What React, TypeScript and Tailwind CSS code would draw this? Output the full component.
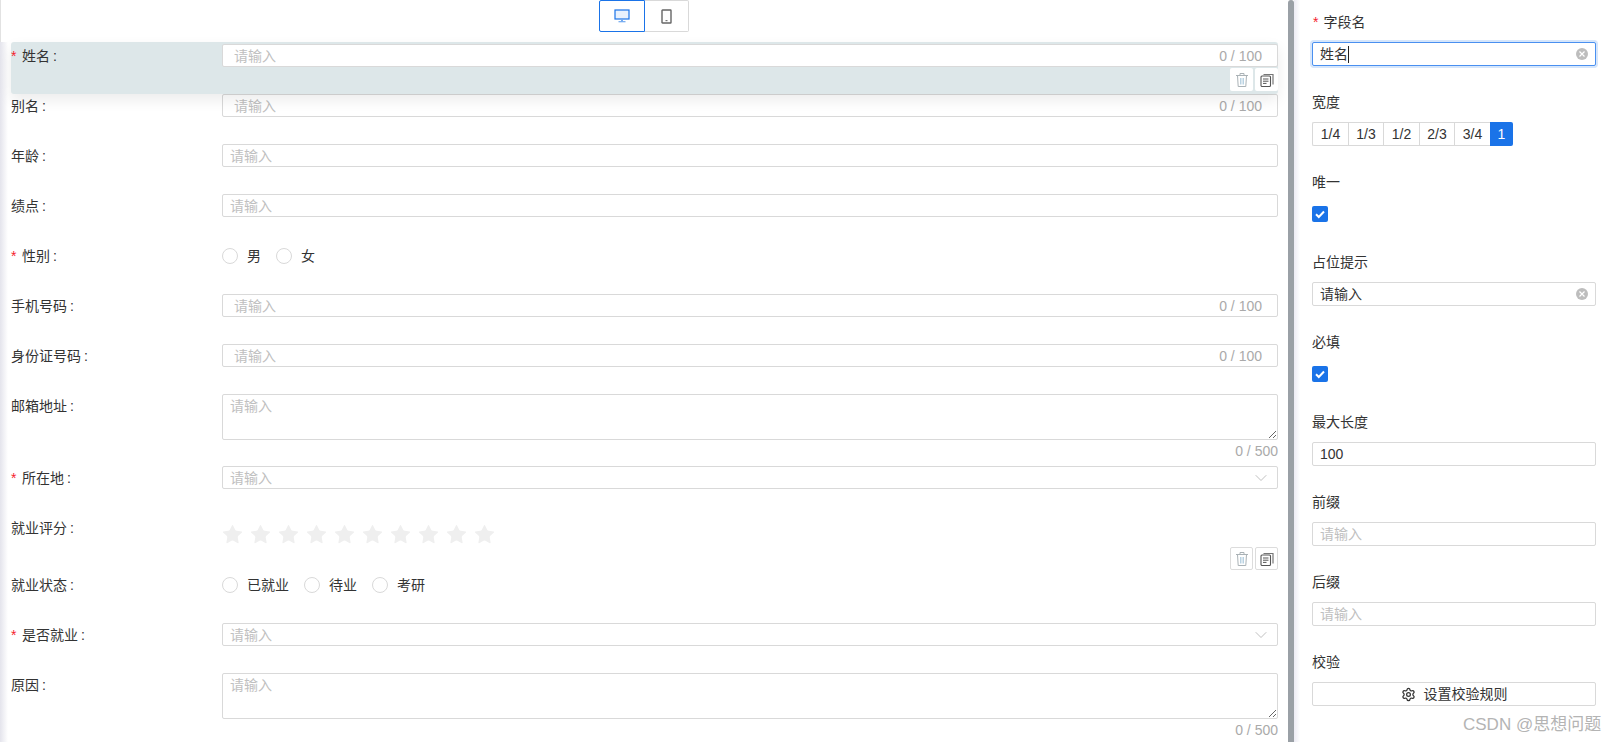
import { ChevronDown, Settings, Star } from 'lucide-react';

const fontStack = { fontFamily: '"Liberation Sans", "Noto Sans CJK SC", sans-serif' };

const MonitorIcon = () => (
  <svg width="16" height="14" viewBox="0 0 16 14" fill="none">
    <rect x="1" y="1" width="14" height="9" fill="#e8f1fd" stroke="#1a73e8" strokeWidth="1.2" />
    <path d="M8 10v2.5" stroke="#6fa8f0" strokeWidth="2" />
    <path d="M4.5 12.7h7" stroke="#6fa8f0" strokeWidth="1.2" />
  </svg>
);

const PhoneIcon = () => (
  <svg width="11" height="15" viewBox="0 0 11 15" fill="none">
    <rect x="1" y="1" width="9" height="13" rx="0.5" stroke="#666" strokeWidth="1.4" />
    <path d="M4.5 11.6h2" stroke="#777" strokeWidth="1.2" />
  </svg>
);

const TrashIcon = () => (
  <svg width="14" height="16" viewBox="0 0 14 16" fill="none" stroke="#aab2b6" strokeWidth="1">
    <path d="M1 3.5h12M5 3.5V1.5h4v2M2.5 3.5l.7 11h7.6l.7-11" />
    <path d="M5.5 6v6.5M7 6v6.5M8.5 6v6.5" stroke="#b9d2e2" />
  </svg>
);

const CopyIcon = () => (
  <svg width="14" height="14" viewBox="0 0 14 14" fill="none">
    <path d="M3.5 1.5h9.5v10" stroke="#777" strokeWidth="1.2" />
    <rect x="1" y="3" width="9.5" height="10.5" rx="1" fill="#fff" stroke="#555" strokeWidth="1.1" />
    <path d="M3 6h5.5M3 8.2h5.5M3 10.4h3.5" stroke="#555" strokeWidth="1" />
  </svg>
);

const ClearIcon = () => (
  <span className="flex h-[12px] w-[12px] items-center justify-center rounded-full bg-[#bdbdbd] text-[#fff]">
    <svg width="6" height="6" viewBox="0 0 6 6" stroke="currentColor" strokeWidth="1.2">
      <path d="M0.5 0.5l5 5M5.5 0.5l-5 5" />
    </svg>
  </span>
);

const ActionButtons = ({ bordered }: { bordered?: boolean }) => (
  <div className="flex gap-[2px]">
    <div className={`flex h-[23px] w-[23px] items-center justify-center rounded-[2px] bg-white ${bordered ? 'border border-[#dcdcdc]' : ''}`}>
      <TrashIcon />
    </div>
    <div className={`flex h-[23px] w-[23px] items-center justify-center rounded-[2px] bg-white ${bordered ? 'border border-[#dcdcdc]' : ''}`}>
      <CopyIcon />
    </div>
  </div>
);

const FieldLabel = ({ text, required }: { text: string; required?: boolean }) => (
  <div className="flex w-[211px] shrink-0 items-start text-[14px] leading-[24px] text-[#333]">
    {required && <span className="w-[11px] text-[#f5222d]">*</span>}
    <span>{text}</span>
    <span className="ml-[3px]">:</span>
  </div>
);

const CountInput = () => (
  <div className="flex h-[23px] flex-1 items-center rounded-[2px] border border-[#d9d9d9] bg-white pt-[2px] pl-[11px] pr-[15px]">
    <input placeholder="请输入" className="min-w-0 flex-1 bg-transparent text-[14px] outline-none placeholder:text-[#c0c0c0]" />
    <span className="text-[14px] text-[#aaa]">0 / 100</span>
  </div>
);

const PlainInput = () => (
  <input placeholder="请输入" className="h-[23px] flex-1 rounded-[2px] border border-[#d9d9d9] bg-white pl-[7px] text-[14px] outline-none placeholder:text-[#c0c0c0]" />
);

const SelectInput = () => (
  <div className="flex h-[23px] flex-1 items-center justify-between rounded-[2px] border border-[#d9d9d9] bg-white pl-[7px] pr-[6px]">
    <span className="mt-[2px] text-[14px] text-[#c0c0c0]">请输入</span>
    <ChevronDown size={20} strokeWidth={0.9} className="text-[#aaa]" />
  </div>
);

const TextArea = () => (
  <div className="flex flex-1 flex-col items-end">
    <textarea placeholder="请输入" className="block h-[46px] w-full rounded-[2px] border border-[#d9d9d9] bg-white px-[7px] text-[14px] leading-[22px] outline-none placeholder:text-[#c0c0c0]" />
    <span className="mt-[1px] text-[14px] leading-[20px] text-[#aaa]">0 / 500</span>
  </div>
);

const RadioGroup = ({ items }: { items: { text: string; width: string }[] }) => (
  <div className="flex h-[24px] items-center">
    {items.map((item) => (
      <div key={item.text} className={`flex items-center ${item.width}`}>
        <span className="h-[16px] w-[16px] rounded-full border border-[#d9d9d9] bg-white"></span>
        <span className="ml-[9px] text-[14px] text-[#333]">{item.text}</span>
      </div>
    ))}
  </div>
);

const Row = ({ height, children }: { height: string; children: React.ReactNode }) => (
  <div className={`flex items-start ${height}`}>{children}</div>
);

const SideField = ({ label, required, children }: { label: string; required?: boolean; children: React.ReactNode }) => (
  <div className="h-[80px]">
    <div className="h-[42px] pt-[12px] text-[14px] leading-[20px] text-[#333]">
      {required && <span className="mr-[5px] ml-[1px] text-[#f5222d]">*</span>}
      {label}
    </div>
    {children}
  </div>
);

const SideInput = ({ placeholder, value, clear }: { placeholder?: string; value?: string; clear?: boolean }) => (
  <div className="flex h-[24px] items-center rounded-[2px] border border-[#d9d9d9] bg-white pl-[7px] pr-[7px]">
    <input placeholder={placeholder} defaultValue={value} className="min-w-0 flex-1 text-[14px] text-[#333] outline-none placeholder:text-[#c0c0c0]" />
    {clear && <ClearIcon />}
  </div>
);

const CheckBox = () => (
  <div className="mt-[4px] flex h-[16px] w-[16px] items-center justify-center rounded-[2px] bg-[#1a73e8]">
    <svg width="12" height="12" viewBox="0 0 12 12" fill="none" stroke="#fff" strokeWidth="2">
      <path d="M2 6.2l2.8 2.8L10 3.5" />
    </svg>
  </div>
);

const widths = [
  { text: '1/4', w: 'w-[36px]' },
  { text: '1/3', w: 'w-[35px]' },
  { text: '1/2', w: 'w-[36px]' },
  { text: '2/3', w: 'w-[35px]' },
  { text: '3/4', w: 'w-[36px]' },
];

const App = () => {
  return (
    <div style={fontStack} className="relative flex h-[742px] w-[1614px] overflow-hidden bg-white">
      {/* left canvas */}
      <div className="relative w-[1288px] shrink-0 pl-[11px] pr-[10px]">
        <div className="absolute top-0 left-0 h-[42px] w-[1px] bg-[#e2e2e2]"></div>
        <div className="absolute top-[42px] bottom-0 left-0 w-[8px] bg-gradient-to-r from-[#e4e4ec] to-white"></div>

        <div className="flex h-[44px] justify-center pr-[1px]">
          <div className="flex h-[32px]">
            <div className="flex h-[32px] w-[46px] items-center justify-center rounded-l-[2px] border border-[#1a73e8]">
              <MonitorIcon />
            </div>
            <div className="flex h-[32px] w-[44px] items-center justify-center rounded-r-[2px] border border-l-0 border-[#d9d9d9]">
              <PhoneIcon />
            </div>
          </div>
        </div>

        <div className="relative">
          <div className="absolute -top-[2px] right-0 left-0 z-10 flex h-[52px] items-end justify-end rounded-[3px] bg-[#dde7e9] pb-[3px] shadow-[0_6px_14px_rgba(0,0,0,0.08)]">
            <ActionButtons />
          </div>
          <div className="relative z-20">
            <Row height="h-[50px]">
              <FieldLabel text="姓名" required />
              <CountInput />
            </Row>
          </div>
        </div>
        <Row height="h-[50px]">
          <FieldLabel text="别名" />
          <CountInput />
        </Row>
        <Row height="h-[50px]">
          <FieldLabel text="年龄" />
          <PlainInput />
        </Row>
        <Row height="h-[50px]">
          <FieldLabel text="绩点" />
          <PlainInput />
        </Row>
        <Row height="h-[50px]">
          <FieldLabel text="性别" required />
          <RadioGroup items={[{ text: '男', width: 'w-[54px]' }, { text: '女', width: 'w-[54px]' }]} />
        </Row>
        <Row height="h-[50px]">
          <FieldLabel text="手机号码" />
          <CountInput />
        </Row>
        <Row height="h-[50px]">
          <FieldLabel text="身份证号码" />
          <CountInput />
        </Row>
        <Row height="h-[72px]">
          <FieldLabel text="邮箱地址" />
          <TextArea />
        </Row>
        <Row height="h-[50px]">
          <FieldLabel text="所在地" required />
          <SelectInput />
        </Row>
        <Row height="h-[57px]">
          <FieldLabel text="就业评分" />
          <div className="flex flex-1 flex-col">
            <div className="-ml-[1px] flex h-[36px] items-center gap-[5px] pt-[1px]">
              {Array.from({ length: 10 }).map((_, i) => (
                <Star key={i} size={23} fill="#efefef" strokeWidth={0} />
              ))}
            </div>
            <div className="-mt-[5px] flex justify-end">
              <ActionButtons bordered />
            </div>
          </div>
        </Row>
        <Row height="h-[50px]">
          <FieldLabel text="就业状态" />
          <RadioGroup
            items={[
              { text: '已就业', width: 'w-[82px]' },
              { text: '待业', width: 'w-[68px]' },
              { text: '考研', width: 'w-[60px]' },
            ]}
          />
        </Row>
        <Row height="h-[50px]">
          <FieldLabel text="是否就业" required />
          <SelectInput />
        </Row>
        <Row height="h-[71px]">
          <FieldLabel text="原因" />
          <TextArea />
        </Row>
      </div>

      {/* divider */}
      <div className="h-full w-[6px] shrink-0 rounded-t-[3px] bg-[#9aa0a6]"></div>

      {/* right panel */}
      <div className="flex-1 bg-gradient-to-r from-[#ecebf4] via-white via-[2%] to-white pr-[18px] pl-[18px]">
        <SideField label="字段名" required>
          <div className="flex h-[24px] items-center rounded-[2px] border border-[#4a90f0] bg-white pr-[7px] pl-[7px] shadow-[0_0_0_2px_#d6e6fb]">
            <span className="text-[14px] text-[#333]">姓名</span>
            <span className="h-[17px] w-[1px] bg-[#222]"></span>
            <span className="ml-auto">
              <ClearIcon />
            </span>
          </div>
        </SideField>
        <SideField label="宽度">
          <div className="flex h-[24px]">
            {widths.map((item) => (
              <div key={item.text} className={`flex items-center justify-center border border-r-0 border-[#d9d9d9] text-[14px] text-[#333] first:rounded-l-[2px] ${item.w}`}>
                {item.text}
              </div>
            ))}
            <div className="flex w-[23px] items-center justify-center rounded-r-[2px] bg-[#1a73e8] text-[14px] text-white">1</div>
          </div>
        </SideField>
        <SideField label="唯一">
          <CheckBox />
        </SideField>
        <SideField label="占位提示">
          <SideInput value="请输入" clear />
        </SideField>
        <SideField label="必填">
          <CheckBox />
        </SideField>
        <SideField label="最大长度">
          <SideInput value="100" />
        </SideField>
        <SideField label="前缀">
          <SideInput placeholder="请输入" />
        </SideField>
        <SideField label="后缀">
          <SideInput placeholder="请输入" />
        </SideField>
        <SideField label="校验">
          <div className="flex h-[24px] items-center justify-center gap-[8px] rounded-[2px] border border-[#d9d9d9] text-[14px] text-[#333]">
            <Settings size={15} />
            <span>设置校验规则</span>
          </div>
        </SideField>
      </div>

      {/* watermark */}
      <div className="pointer-events-none absolute top-[713px] left-[1463px] text-[17px] leading-[24px] whitespace-nowrap text-[#b4b4b4]">
        CSDN @思想问题
      </div>
    </div>
  );
};

export default App;
